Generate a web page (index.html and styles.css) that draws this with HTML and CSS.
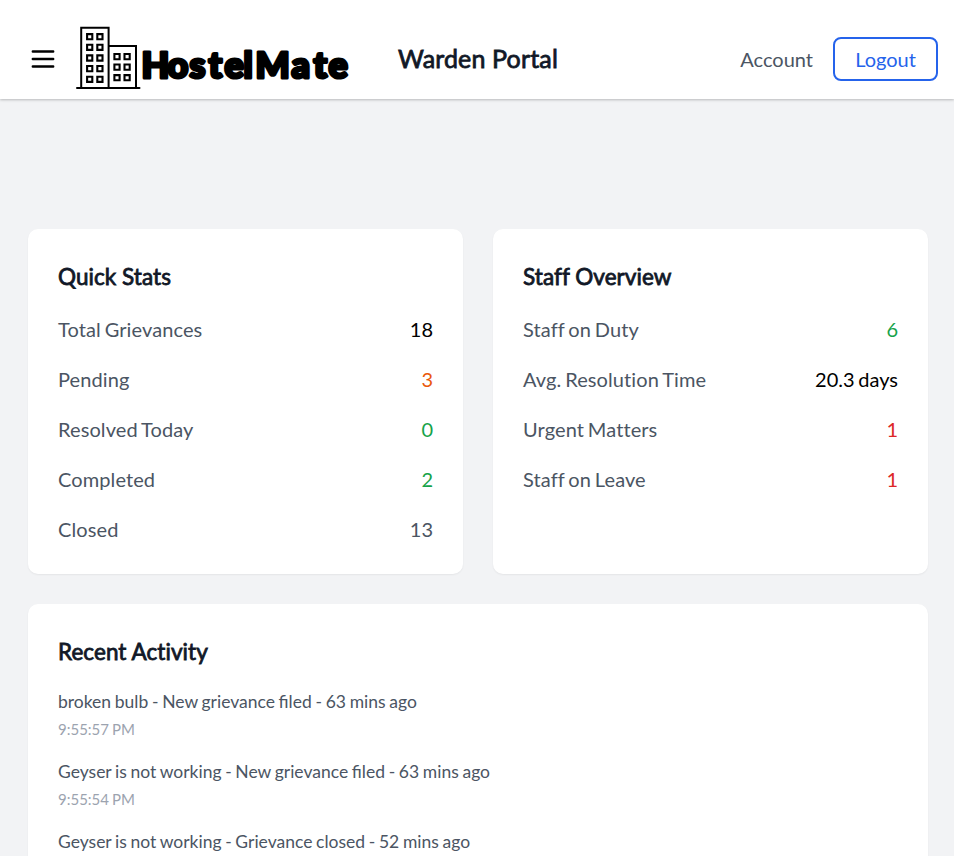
FILE: index.html
```html
<!DOCTYPE html>
<html lang="en">
<head>
<meta charset="utf-8">
<title>HostelMate - Warden Portal</title>
<link rel="stylesheet" href="styles.css">
</head>
<body>
<header class="topbar">
  <button class="menu" aria-label="Menu">
    <svg width="24" height="20" viewBox="0 0 24 20"><path d="M1.8 2.5H22.2M1.8 10H22.2M1.8 17.5H22.2"/></svg>
  </button>
  <svg class="logo" width="276" height="64" viewBox="0 0 276 64">
    <g class="building">
      <path d="M1 62H63.5M5.2 62V1.8H32.6V62M32.6 20H60V62"/>
      <g class="windows">
        <path d="M11.1 8.1h5.2v5.2h-5.2zM21.3 8.1h5.2v5.2h-5.2zM11.1 18.7h5.2v5.2h-5.2zM21.3 18.7h5.2v5.2h-5.2zM11.1 29.4h5.2v5.2h-5.2zM21.3 29.4h5.2v5.2h-5.2zM11.1 40h5.2v5.2h-5.2zM21.3 40h5.2v5.2h-5.2zM11.1 50.7h5.2v5.2h-5.2zM21.3 50.7h5.2v5.2h-5.2z"/>
        <path d="M38.4 28h5.2v5.2h-5.2zM48.5 28h5.2v5.2h-5.2zM38.4 38.5h5.2v5.2h-5.2zM48.5 38.5h5.2v5.2h-5.2zM38.4 49.1h5.2v5.2h-5.2zM48.5 49.1h5.2v5.2h-5.2z"/>
      </g>
    </g>
    <text class="wordmark" x="65.5 91.5 113.5 132.5 148.5 167.5 179.5 215.5 237.5 252.5" y="51.8">HostelMate</text>
  </svg>
  <h1 class="title">Warden Portal</h1>
  <nav class="actions">
    <a class="account">Account</a>
    <button class="logout">Logout</button>
  </nav>
</header>
<main class="dashboard">
  <section class="card">
    <h2>Quick Stats</h2>
    <dl class="stats">
      <div><dt>Total Grievances</dt><dd>18</dd></div>
      <div><dt>Pending</dt><dd class="orange">3</dd></div>
      <div><dt>Resolved Today</dt><dd class="green">0</dd></div>
      <div><dt>Completed</dt><dd class="green">2</dd></div>
      <div><dt>Closed</dt><dd class="gray">13</dd></div>
    </dl>
  </section>
  <section class="card">
    <h2>Staff Overview</h2>
    <dl class="stats">
      <div><dt>Staff on Duty</dt><dd class="green">6</dd></div>
      <div><dt>Avg. Resolution Time</dt><dd>20.3 days</dd></div>
      <div><dt>Urgent Matters</dt><dd class="red">1</dd></div>
      <div><dt>Staff on Leave</dt><dd class="red">1</dd></div>
    </dl>
  </section>
  <section class="card wide">
    <h2>Recent Activity</h2>
    <ul class="activity">
      <li><p>broken bulb - New grievance filed - 63 mins ago</p><time>9:55:57 PM</time></li>
      <li><p>Geyser is not working - New grievance filed - 63 mins ago</p><time>9:55:54 PM</time></li>
      <li><p>Geyser is not working - Grievance closed - 52 mins ago</p></li>
    </ul>
  </section>
</main>
</body>
</html>
```
FILE: styles.css
```css
* { box-sizing: border-box; margin: 0; padding: 0; }
body {
  height: 856px;
  overflow: hidden;
  background: #f2f3f5;
  color: #000;
  font: 400 20px/30px Lato, sans-serif;
}
.topbar {
  display: flex;
  align-items: center;
  height: 99px;
  padding: 18px 16px 0 31px;
  background: #fff;
  box-shadow: 0 1px 3px rgba(0,0,0,.15), 0 1px 2px rgba(0,0,0,.1);
}
.menu { display: flex; width: 24px; border: 0; background: none; }
.menu svg { fill: none; stroke: #000; stroke-width: 2.4; stroke-linecap: round; }
.logo { flex: none; margin: -1px 0 0 21px; }
.building { fill: none; stroke: #000; stroke-width: 2; stroke-linecap: round; }
.windows { stroke-width: 2.1; }
.wordmark {
  font: 900 36px Lato, sans-serif;
  fill: #000;
  stroke: #000;
  stroke-width: 3.2px;
  stroke-linejoin: round;
}
.title {
  margin-left: 46px;
  font-size: 25px;
  font-weight: 400;
  line-height: 35px;
  letter-spacing: .15px;
  color: #111827;
  -webkit-text-stroke: .8px #111827;
}
.actions { display: flex; align-items: center; gap: 20px; margin-left: auto; margin-top: 1px; }
.account { margin-top: -1px; color: #4b5563; }
.logout {
  width: 105px;
  height: 44px;
  border: 2px solid #2563eb;
  border-radius: 8px;
  background: #fff;
  color: #2563eb;
  font: inherit;
}
.dashboard {
  display: grid;
  grid-template-columns: 1fr 1fr;
  gap: 30px;
  padding: 130px 26px 0 28px;
}
.card {
  padding: 30px;
  border-radius: 10px;
  background: #fff;
  box-shadow: 0 1px 2px rgba(0,0,0,.06);
}
.wide { grid-column: 1 / -1; padding-bottom: 0; border-radius: 10px 10px 0 0; }
h2 {
  font-size: 22.5px;
  font-weight: 400;
  line-height: 35px;
  letter-spacing: .06px;
  color: #111827;
  font-variant-ligatures: none;
  -webkit-text-stroke: .8px #111827;
}
.stats { display: grid; gap: 20px; margin-top: 20px; font-variant-ligatures: none; }
.stats div { display: flex; justify-content: space-between; word-spacing: -1.4px; }
.stats dt { letter-spacing: .1px; }
.stats dt, .gray { color: #4b5563; }
.orange { color: #ea580c; }
.green { color: #16a34a; }
.red { color: #dc2626; }
.activity { display: grid; gap: 15px; margin-top: 20px; list-style: none; }
.activity li { height: 55px; }
.activity li:last-child { height: 27px; }
.activity p { font-size: 17.5px; line-height: 25px; word-spacing: -.8px; color: #4b5563; }
.activity time { display: block; margin-top: 5px; font-size: 15px; line-height: 20px; word-spacing: -.8px; color: #9ca3af; }
```
